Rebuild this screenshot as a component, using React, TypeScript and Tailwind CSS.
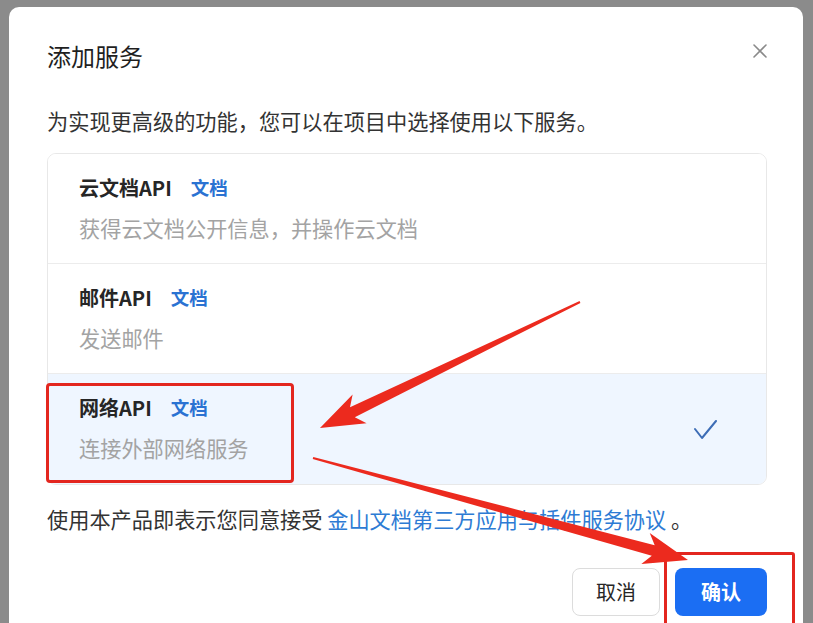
import React from 'react';

const services = [
  { name: '云文档API', desc: '获得云文档公开信息，并操作云文档', selected: false },
  { name: '邮件API', desc: '发送邮件', selected: false },
  { name: '网络API', desc: '连接外部网络服务', selected: true },
];

// tapered annotation arrow, thin tail -> wide head
const arrowPoints = (x1: number, y1: number, x2: number, y2: number) => {
  const dx = x2 - x1;
  const dy = y2 - y1;
  const len = Math.hypot(dx, dy);
  const ux = dx / len;
  const uy = dy / len;
  const nx = -uy;
  const ny = ux;
  const headLen = 44;
  const neck = 36;
  const p = (d: number, w: number) => `${x2 - ux * d + nx * w},${y2 - uy * d + ny * w}`;
  return [
    `${x1 + nx * 1},${y1 + ny * 1}`,
    p(neck, 5.5),
    p(headLen, 16),
    `${x2},${y2}`,
    p(headLen, -16),
    p(neck, -5.5),
    `${x1 - nx * 1},${y1 - ny * 1}`,
  ].join(' ');
};

const ServiceRow = ({ name, desc, selected, last }: { name: string; desc: string; selected: boolean; last: boolean }) => (
  <div className={`h-[110px] pl-[31px] pr-[48px] pt-[21px] flex items-start justify-between ${selected ? 'bg-[#eff6ff]' : 'bg-white'} ${last ? '' : 'border-b border-[#ececec]'}`}>
    <div className="flex flex-col">
      <div className="flex items-center h-[26px]">
        <span className="text-[20px] font-bold text-[#262626]">{name}</span>
        <span className="ml-[19px] text-[18.5px] font-bold text-[#2a72d2]">文档</span>
      </div>
      <div className="mt-[12px] h-[30px] leading-[30px] text-[21.2px] text-[#a3a3a3]">{desc}</div>
    </div>
    {selected && (
      <svg width="24" height="22" viewBox="0 0 24 22" className="mt-[25px]">
        <polyline points="1,9 8,18 22,1" fill="none" stroke="#3d6db6" strokeWidth="2" strokeLinecap="round" strokeLinejoin="round" />
      </svg>
    )}
  </div>
);

export default function App() {
  return (
    <div
      className="relative w-[813px] h-[623px] overflow-hidden bg-[#8b8b8b] pt-[7px] pl-[9px] pr-[10px]"
      style={{ fontFamily: '"Noto Sans CJK SC", "Noto Sans", sans-serif' }}
    >
      <div className="h-[640px] bg-white rounded-[10px] pl-[38px] pr-[36px] pt-[33px]">
        <div className="flex items-center justify-between h-[32px]">
          <h1 className="text-[24px] leading-[32px] text-[#1f1f1f]">添加服务</h1>
          <svg width="14" height="14" viewBox="0 0 14 14" className="-mt-[10px]">
            <path d="M1 1L13 13M13 1L1 13" stroke="#8a8a8a" strokeWidth="1.6" strokeLinecap="round" />
          </svg>
        </div>

        <p className="mt-[34px] h-[30px] leading-[30px] text-[21.2px] text-[#333]">为实现更高级的功能，您可以在项目中选择使用以下服务。</p>

        <div className="mt-[17px] border border-[#e8e8e8] rounded-[9px] overflow-hidden">
          {services.map((s, i) => (
            <ServiceRow key={s.name} {...s} last={i === services.length - 1} />
          ))}
        </div>

        <p className="mt-[19px] h-[30px] leading-[30px] text-[21.2px] text-[#333] whitespace-nowrap">
          使用本产品即表示您同意接受 <span className="text-[#2d7bd4]">金山文档第三方应用与插件服务协议</span> 。
        </p>

        <div className="mt-[34px] flex justify-end gap-[15px]">
          <button className="w-[88px] h-[48px] rounded-[8px] border border-[#dcdcdc] bg-white text-[20px] text-[#262626]">取消</button>
          <button className="w-[92px] h-[48px] rounded-[8px] bg-[#1b6ef3] text-[20px] font-bold text-white">确认</button>
        </div>
      </div>

      {/* annotations */}
      <div className="absolute left-[46px] top-[383px] w-[248px] h-[100px] border-[3px] border-[#e3261f] rounded-[4px] pointer-events-none" />
      <div className="absolute left-[664px] top-[552px] w-[131px] h-[90px] border-[3px] border-[#e3261f] rounded-[3px] pointer-events-none" />
      <svg className="absolute left-0 top-0 pointer-events-none" width="813" height="623">
        <polygon points={arrowPoints(580, 302, 320, 428)} fill="#ec2a1e" />
        <polygon points={arrowPoints(313, 458, 688, 560)} fill="#ec2a1e" />
      </svg>
    </div>
  );
}
